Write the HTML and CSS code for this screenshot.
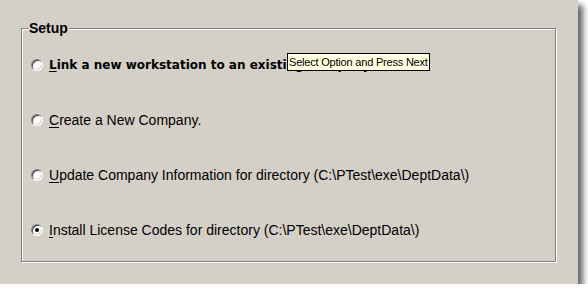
FILE: index.html
```html
<!DOCTYPE html>
<html>
<head>
<meta charset="utf-8">
<link rel="stylesheet" href="styles.css">
</head>
<body>
<div class="panel">
  <fieldset class="group">
    <legend class="legend">Setup</legend>
    <div class="option bold">
      <span class="radio"></span>
      <span class="label"><u>L</u>ink a new workstation to an existing Company.</span>
    </div>
    <div class="option">
      <span class="radio"></span>
      <span class="label"><u>C</u>reate a New Company.</span>
    </div>
    <div class="option">
      <span class="radio"></span>
      <span class="label"><u>U</u>pdate Company Information for directory (C:\PTest\exe\DeptData\)</span>
    </div>
    <div class="option">
      <span class="radio checked"></span>
      <span class="label"><u>I</u>nstall License Codes for directory (C:\PTest\exe\DeptData\)</span>
    </div>
  </fieldset>
  <div class="tooltip">Select Option and Press Next</div>
</div>
</body>
</html>
```
FILE: styles.css
```css
html, body {
  margin: 0;
  padding: 0;
  background: #ffffff;
}
.panel {
  position: relative;
  width: 578px;
  height: 284px;
  background: #d4d0c8;
  box-shadow: 5px 5px 6px rgba(0,0,0,0.6);
  box-sizing: border-box;
  padding: 20px 0 0 21px;
  font-family: "Liberation Sans", Arial, sans-serif;
  font-size: 14px;
  color: #000;
}
.group {
  margin: 0;
  padding: 1px 0 4px 9px;
  width: 535px;
  box-sizing: border-box;
  border: 1px solid #808080;
  box-shadow: inset 1px 1px 0 #ffffff, 1px 1px 0 #ffffff;
  display: flex;
  flex-direction: column;
}
.legend {
  padding: 0 1px;
  margin-left: -3px;
  font-weight: bold;
  font-size: 14px;
  background: #d4d0c8;
  line-height: 16px;
}
.option {
  display: flex;
  align-items: center;
  height: 55px;
  flex: none;
  gap: 6px;
}
.bold .label {
  font-family: "DejaVu Sans", Verdana, sans-serif;
  font-weight: bold;
  font-size: 12px;
}
.label u {
  text-decoration-thickness: 1px;
  text-underline-offset: 2px;
}
.radio {
  width: 12px;
  height: 12px;
  border-radius: 50%;
  box-sizing: border-box;
  background: #ffffff;
  border: 1px solid;
  border-color: #808080 #ffffff #ffffff #808080;
  box-shadow: inset 1px 1px 0 #404040, inset -1px -1px 0 #d4d0c8;
  position: relative;
  flex: none;
}
.radio.checked::after {
  content: "";
  position: absolute;
  left: 3px;
  top: 3px;
  width: 4px;
  height: 4px;
  border-radius: 50%;
  background: #000;
}
.tooltip {
  position: absolute;
  left: 287px;
  top: 53px;
  width: 143px;
  height: 18px;
  box-sizing: border-box;
  border: 1px solid #000;
  background: #ffffe1;
  font-family: "Liberation Sans", Arial, sans-serif;
  font-size: 11px;
  letter-spacing: -0.2px;
  line-height: 16px;
  padding-left: 1px;
  white-space: nowrap;
  overflow: hidden;
}
```
